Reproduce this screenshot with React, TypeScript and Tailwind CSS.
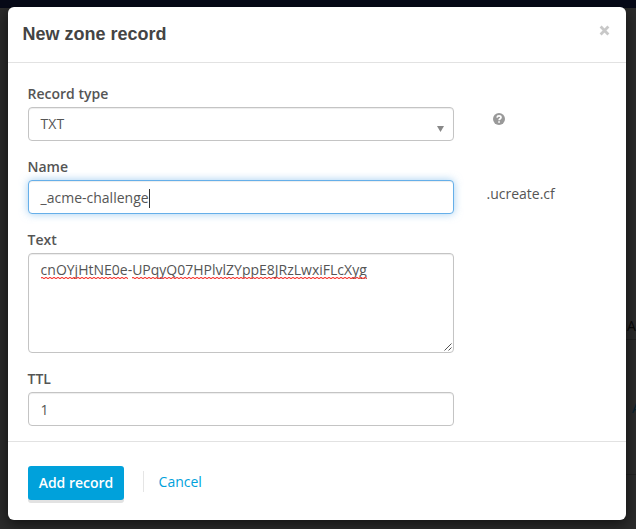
import type { ReactNode } from "react";

function Field({ label, children, aside }: { label: string; children: ReactNode; aside?: ReactNode }) {
  return (
    <div className="flex">
      <div className="w-[426px]">
        <div className="mb-[3px] -ml-[0.5px] h-5 text-[14px] leading-5 font-semibold text-[#555]">{label}</div>
        {children}
      </div>
      {aside}
    </div>
  );
}

const box =
  "flex h-[34px] items-center rounded-[4px] border border-[#c4c4c4] bg-white pl-[11.6px] pr-3 text-[14px] leading-5 text-[#555] shadow-[inset_0_1px_1px_rgba(0,0,0,0.075)]";

function Misspelled({ id, children }: { id: string; children: ReactNode }) {
  return (
    <span className="relative inline-block">
      {children}
      <svg className="absolute top-[17px] left-0 h-[2px] w-full" shapeRendering="crispEdges">
        <defs>
          <pattern id={id} width="4" height="2" patternUnits="userSpaceOnUse">
            <path d="M0 0h2v1h-2zM2 1h2v1h-2z" fill="#f8453f" />
            <path d="M2 0h2v1h-2zM0 1h2v1h-2z" fill="#f8453f" opacity="0.3" />
          </pattern>
        </defs>
        <rect width="100%" height="2" fill={`url(#${id})`} />
      </svg>
    </span>
  );
}

function HelpIcon() {
  return (
    <svg className="mt-[29px] ml-[39px] size-3" viewBox="0 0 12 12" fill="none">
      <circle cx="6" cy="6" r="6" fill="#999" />
      <path d="M4 4.6C4.2 3.4 5 2.9 6 2.9c1.1 0 2 .6 2 1.6C8 5.7 6.1 5.7 6.1 7.2" stroke="#fff" strokeWidth="1.7" />
      <path d="M5.2 8.2h1.7v1.6H5.2z" fill="#fff" />
    </svg>
  );
}

export default function App() {
  return (
    <div
      className="relative h-[529px] w-[636px] overflow-hidden bg-[#2b2b2b] pt-[7px] pl-2"
      style={{ fontFamily: '"Open Sans", "Noto Sans", sans-serif' }}
    >
      <div className="absolute top-0 left-0 h-2 w-full bg-[#070a18]" />
      <span className="absolute top-[316px] left-[627px] text-[14px] leading-5 text-[#080808]">A</span>
      <span className="absolute top-[398px] left-[632px] text-[14px] leading-5 text-[#06202e]">A</span>
      <div className="absolute top-[339px] right-0 h-px w-3 bg-[#222]" />
      <div className="absolute top-[474px] right-0 h-px w-3 bg-[#222]" />

      <div className="relative flex h-[513px] w-[618px] flex-col rounded-[6px] bg-white shadow-[0_4px_14px_rgba(0,0,0,0.6)]">
        <header className="flex h-14 justify-between border-b border-[#e2e2e2] pr-4 pl-[14.5px]">
          <h1 className="pt-[15px] text-[18px] leading-6 font-bold text-[#444]" style={{ fontFamily: '"Liberation Sans", Arial, sans-serif' }}>
            New zone record
          </h1>
          <button aria-label="Close" className="flex h-[47px] items-center text-[#c8c8c8]">
            <svg width="11" height="11" viewBox="0 0 11 11" stroke="currentColor" strokeWidth="2.8">
              <path d="M1.6 1.6l7.8 7.8M9.4 1.6l-7.8 7.8" />
            </svg>
          </button>
        </header>

        <main className="flex h-[378px] flex-col gap-4 px-5 pt-[21px]">
          <Field label="Record type" aside={<HelpIcon />}>
            <div className={`${box} justify-between`}>
              TXT
              <svg width="7" height="6" className="mt-[9px] -mr-[3px] text-[#888]">
                <path d="M0 0h7L3.5 6z" fill="currentColor" />
              </svg>
            </div>
          </Field>
          <Field label="Name" aside={<div className="mt-[27px] ml-[32.5px] text-[14px] leading-5 text-[#555]">.ucreate.cf</div>}>
            <div className="flex h-[34px] items-center rounded-[4px] border border-[#66afe9] bg-white pt-[2px] pr-3 pl-[11.6px] text-[14px] leading-5 text-[#555] shadow-[inset_0_1px_1px_rgba(0,0,0,0.075),0_0_8px_rgba(102,175,233,0.6)]">
              _acme-challenge
              <span className="h-[19px] w-px bg-[#333]" />
            </div>
          </Field>
          <Field label="Text">
            <div className="relative h-[100px] rounded-[4px] border border-[#c4c4c4] pt-[6px] pr-3 pl-[11.6px] text-[14px] leading-5 text-[#555] shadow-[inset_0_1px_1px_rgba(0,0,0,0.075)]">
              <Misspelled id="wave-a">cnOYjHtNE0e</Misspelled>-<Misspelled id="wave-b">UPqyQ07HPlvlZYppE8JRzLwxiFLcXyg</Misspelled>
              <svg className="absolute right-[1px] bottom-[1px]" width="8" height="8" stroke="#555" strokeWidth="1">
                <path d="M0.5 7.5l7-7M4.5 7.5l3-3" />
              </svg>
            </div>
          </Field>
          <Field label="TTL">
            <div className={`${box} pt-[2px]`}>1</div>
          </Field>
        </main>

        <footer className="flex flex-1 items-start border-t border-[#e2e2e2] px-5 pt-6">
          <button className="h-[34px] w-24 rounded-[3px] bg-[#00a1db] text-[14px] leading-5 font-semibold text-white shadow-[0_3px_0_#e2e2e2]">
            Add record
          </button>
          <div className="mt-[5px] ml-[19px] h-[21px] w-px bg-[#e5e5e5]" />
          <button className="mt-[6px] ml-[14.6px] text-[14px] leading-5 text-[#00a1db]">Cancel</button>
        </footer>
      </div>
    </div>
  );
}
